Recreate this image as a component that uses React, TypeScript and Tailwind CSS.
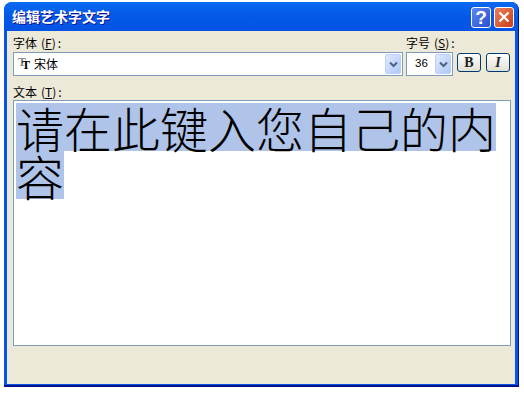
const cjk = "font-['Noto_Sans_CJK_SC',sans-serif]";

function ComboArrow() {
  return (
    <div className="w-[16px] h-full rounded-[2px] flex items-center justify-center border border-[#bcd0f5] bg-gradient-to-br from-[#e1eafe] to-[#aec8f7]">
      <svg width="9" height="7" viewBox="0 0 9 7" fill="none">
        <path d="M1 1.5l3.5 3.5L8 1.5" stroke="#4d6185" strokeWidth="2" />
      </svg>
    </div>
  );
}

function Label({ text, hotkey }: { text: string; hotkey: string }) {
  return (
    <div className={`${cjk} text-[12px] leading-[14px] h-[14px] text-black whitespace-nowrap flex`}>
      <span>{text}</span>
      <span className="ml-[4px]">(<span className="underline">{hotkey}</span>)</span>
      <span className="ml-[2px]">:</span>
    </div>
  );
}

function StyleButton({ label, italic }: { label: string; italic?: boolean }) {
  return (
    <div className="w-[24px] h-[19px] mt-px rounded-[3px] border border-[#003c74] bg-gradient-to-b from-white to-[#e3e0d3] flex items-center justify-center">
      <span className={`font-['Liberation_Serif',serif] font-bold text-[14px] leading-none text-[#222] ${italic ? 'italic' : ''}`}>{label}</span>
    </div>
  );
}

export default function App() {
  return (
    <div className="w-[524px] h-[407px] bg-white pl-[4px] pt-[2px]">
      <div className="w-[515px] h-[385px] flex flex-col rounded-t-[8px] bg-[#0855e4] border-r border-b-2 border-[#00138c] overflow-hidden">
        {/* Title bar */}
        <div className="h-[29px] shrink-0 flex items-center pl-[8px] pr-[4px] bg-gradient-to-b from-[#0a6af0] via-[#0458e8] to-[#0553e4]">
          <span className={`${cjk} font-bold text-[14px] text-white [text-shadow:1px_1px_0_#0f1089]`}>编辑艺术字文字</span>
          <div className="ml-auto flex gap-[3px] mt-px">
            <div className="w-[20px] h-[21px] rounded-[3px] border border-white bg-gradient-to-br from-[#5f86ee] to-[#2a4fd0] flex items-center justify-center">
              <span className="font-['Liberation_Sans',sans-serif] font-bold text-[19px] leading-none text-white">?</span>
            </div>
            <div className="w-[20px] h-[21px] rounded-[3px] border border-white bg-gradient-to-br from-[#e8805c] to-[#c93c12] flex items-center justify-center">
              <svg width="12" height="12" viewBox="0 0 12 12" fill="none">
                <path d="M1.5 1.5l9 9M10.5 1.5l-9 9" stroke="white" strokeWidth="2.2" />
              </svg>
            </div>
          </div>
        </div>

        {/* Dialog body */}
        <div className="flex-1 flex flex-col mx-[3px] mb-px bg-[#ece9d8] pl-[6px] pr-[5px] pt-[5px]">
          <div className="flex">
            <div className="w-[390px] mr-[3px]">
              <Label text="字体" hotkey="F" />
              <div className="mt-[2px] h-[24px] border border-[#7f9db9] bg-white flex items-center p-px">
                <div className="relative w-[16px] h-[16px] ml-[2px] mr-[1px]">
                  <span className="absolute left-[1px] top-0 font-['Liberation_Serif',serif] font-bold text-[12px] leading-none text-[#8a8a8a]">T</span>
                  <span className="absolute left-[5px] top-[3px] font-['Liberation_Serif',serif] font-bold text-[12px] leading-none text-black">T</span>
                </div>
                <span className={`${cjk} text-[12px] text-black`}>宋体</span>
                <div className="ml-auto h-full"><ComboArrow /></div>
              </div>
            </div>
            <div className="w-[47px] mr-[4px]">
              <Label text="字号" hotkey="S" />
              <div className="mt-[2px] h-[24px] border border-[#7f9db9] bg-white flex items-center p-px">
                <span className="font-['Liberation_Sans',sans-serif] text-[11.5px] text-black ml-[7px]">36</span>
                <div className="ml-auto h-full"><ComboArrow /></div>
              </div>
            </div>
            <div className="flex gap-[5px] pt-[16px]">
              <StyleButton label="B" />
              <StyleButton label="I" italic />
            </div>
          </div>

          <div className="mt-[9px]">
            <Label text="文本" hotkey="T" />
          </div>
          <div className={`mt-[1px] w-[498px] h-[246px] border border-[#7f9db9] bg-white pl-[2px] pt-[2px] ${cjk} text-[48px] leading-[48px] font-light text-black`}>
            <div className="w-fit h-[48px] bg-[#afc4e8]">请在此键入您自己的内</div>
            <div className="w-fit h-[48px] bg-[#afc4e8]">容</div>
          </div>
        </div>
      </div>
    </div>
  );
}
